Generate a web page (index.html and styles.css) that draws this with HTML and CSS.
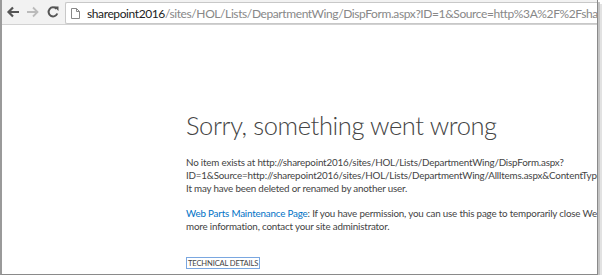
FILE: index.html
```html
<!DOCTYPE html>
<html lang="en">
<head>
    <meta charset="UTF-8">
    <title>Error</title>
    <link rel="stylesheet" href="styles.css">
</head>
<body>
    <div class="window">
        <!-- barra del navegador -->
        <div class="toolbar">
            <span class="nav-btn">
                <svg width="14" height="14" viewBox="0 0 14 14"><path d="M13 7H3M7 2.5L2.5 7 7 11.5" fill="none" stroke="#555" stroke-width="2.2"/></svg>
            </span>
            <span class="nav-btn">
                <svg width="14" height="14" viewBox="0 0 14 14"><path d="M1 7h10M7 2.5L11.5 7 7 11.5" fill="none" stroke="#bbb" stroke-width="1.8"/></svg>
            </span>
            <span class="nav-btn">
                <svg width="14" height="14" viewBox="0 0 14 14"><path d="M11.3 8.5A4.5 4.5 0 1 1 10.4 3.8" fill="none" stroke="#555" stroke-width="2"/><path d="M8 1.5h4.5V6z" fill="#555"/></svg>
            </span>
            <div class="address">
                <svg class="page-icon" width="9" height="11" viewBox="0 0 9 11"><path d="M0.5 0.5h5l3 3v7h-8z M5.5 0.5v3h3" fill="#fff" stroke="#888"/></svg>
                <span class="host">sharepoint2016</span><span class="path">/sites/HOL/Lists/DepartmentWing/DispForm.aspx?ID=1&amp;Source=http%3A%2F%2Fsharepoint2016%2Fsites%2FHOL</span>
            </div>
        </div>

        <!-- contenido del error -->
        <div class="page">
            <div class="content">
                <h1>Sorry, something went wrong</h1>
                <p class="msg">No item exists at http://sharepoint2016/sites/HOL/Lists/DepartmentWing/DispForm.aspx?<br>ID=1&amp;Source=http://sharepoint2016/sites/HOL/Lists/DepartmentWing/AllItems.aspx&amp;ContentTypeId=0x0100<br>It may have been deleted or renamed by another user.</p>
                <p class="msg"><a href="#">Web Parts Maintenance Page</a>: If you have permission, you can use this page to temporarily close Web Parts or remove personal settings. For<br>more information, contact your site administrator.</p>
                <span class="details">TECHNICAL DETAILS</span>
            </div>
        </div>
    </div>
</body>
</html>
```

FILE: styles.css
```css
body {
    margin: 0;
    background: #fff;
    font-family: Lato, 'Open Sans', sans-serif;
}

.window {
    width: 595px;
    height: 274px;
    border-left: 2px solid #9a9a9a;
    border-right: 1px solid #8a8a8a;
    border-bottom: 1px solid #8a8a8a;
    box-shadow: 2px 2px 0 #c4c4c4, 4px 4px 0 #e2e2e2;
    overflow: hidden;
    display: flex;
    flex-direction: column;
}

.toolbar {
    height: 24px;
    background: #f2f2f2;
    border-bottom: 1px solid #d2d2d2;
    display: flex;
    align-items: center;
    padding-left: 1px;
    flex-shrink: 0;
}

.nav-btn {
    width: 20px;
    display: flex;
    justify-content: center;
}

.address {
    margin-left: 2px;
    margin-top: 2px;
    height: 20px;
    flex: 1;
    background: #fff;
    border: 1px solid #c8c8c8;
    border-right: none;
    border-radius: 2px 0 0 2px;
    display: flex;
    align-items: center;
    white-space: nowrap;
    overflow: hidden;
    font-size: 12px;
    letter-spacing: -0.4px;
}

.page-icon {
    margin: 0 7px 0 5px;
    flex-shrink: 0;
}

.host {
    color: #222;
}

.path {
    color: #888;
}

.page {
    flex: 1;
    overflow: hidden;
}

.content {
    padding: 82px 0 0 184px;
    white-space: nowrap;
}

h1 {
    margin: 0 0 13px 0;
    font-weight: 300;
    font-size: 25.5px;
    letter-spacing: -0.4px;
    color: #444;
    line-height: 36px;
}

.msg {
    margin: 0 0 12px 0;
    font-size: 9.8px;
    letter-spacing: -0.18px;
    line-height: 13px;
    color: #444;
}

.msg a {
    color: #0072c6;
    text-decoration: none;
}

.details {
    display: inline-block;
    margin-top: 12px;
    font-size: 7.6px;
    letter-spacing: -0.15px;
    color: #444;
    border: 1px solid #7aa7e0;
    padding: 0 1px;
    line-height: 10px;
}
```
